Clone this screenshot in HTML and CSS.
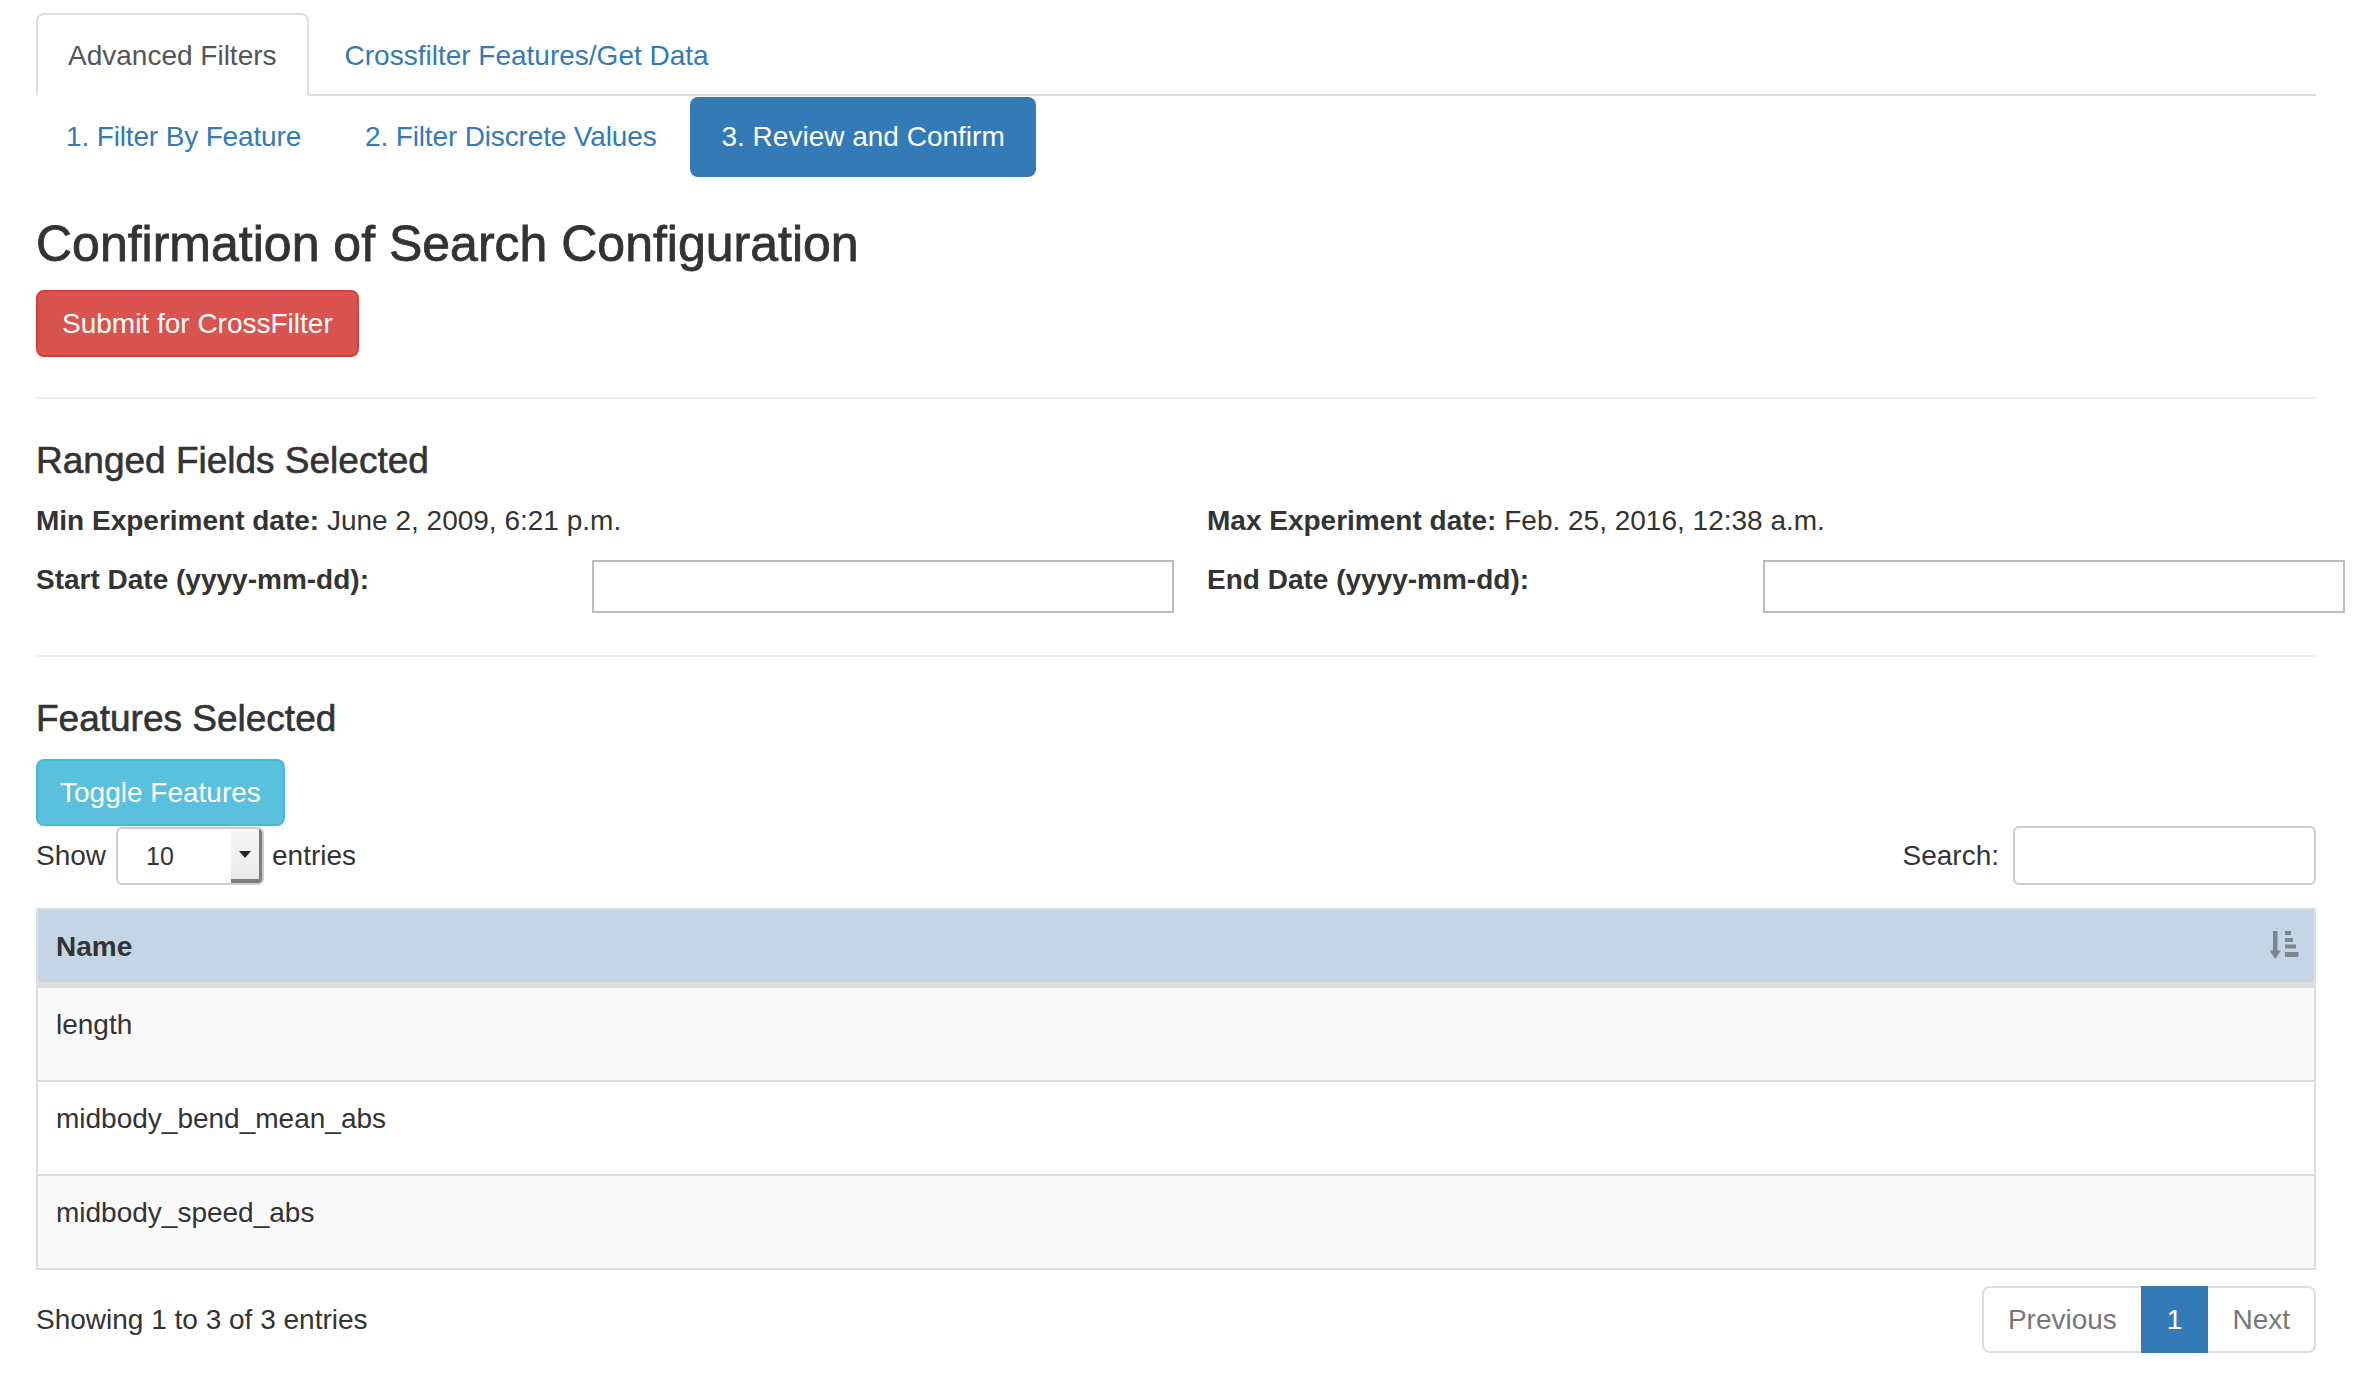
FILE: index.html
```html
<!DOCTYPE html>
<html lang="en">
<head>
<meta charset="utf-8">
<title>Confirmation of Search Configuration</title>
<link rel="stylesheet" href="styles.css">
</head>
<body>
<div class="page">
  <ul class="tabs">
    <li class="active"><a href="#">Advanced Filters</a></li>
    <li><a href="#">Crossfilter Features/Get Data</a></li>
  </ul>
  <ul class="pills">
    <li><a href="#">1. Filter By Feature</a></li>
    <li><a href="#">2. Filter Discrete Values</a></li>
    <li class="active"><a href="#">3. Review and Confirm</a></li>
  </ul>

  <h3 class="title">Confirmation of Search Configuration</h3>
  <button class="btn btn-danger" type="button">Submit for CrossFilter</button>

  <hr class="divider">

  <h4 class="section">Ranged Fields Selected</h4>
  <div class="ranges">
    <div class="range-col">
      <p class="info"><b>Min Experiment date:</b> June 2, 2009, 6:21 p.m.</p>
      <div class="field">
        <label>Start Date (yyyy-mm-dd):</label>
        <input class="date-input" type="text">
      </div>
    </div>
    <div class="range-col">
      <p class="info"><b>Max Experiment date:</b> Feb. 25, 2016, 12:38 a.m.</p>
      <div class="field">
        <label>End Date (yyyy-mm-dd):</label>
        <input class="date-input" type="text">
      </div>
    </div>
  </div>

  <hr class="divider divider-2">

  <h4 class="section">Features Selected</h4>
  <button class="btn btn-info" type="button">Toggle Features</button>

  <div class="dt-top">
    <div class="dt-length">
      <span>Show</span>
      <div class="fake-select">
        <span class="sel-value">10</span>
        <span class="sel-btn"><span class="caret"></span></span>
      </div>
      <span>entries</span>
    </div>
    <div class="dt-search">
      <span>Search:</span>
      <input class="search-input" type="search">
    </div>
  </div>

  <table class="dt-table">
    <thead>
      <tr>
        <th>Name
          <svg class="sort-icon" width="30" height="30" viewBox="0 0 30 30" aria-hidden="true">
            <rect x="4" y="1" width="4.5" height="21" fill="#7b868f"/>
            <polygon points="0.5,20.5 12,20.5 6.25,29" fill="#7b868f"/>
            <rect x="16" y="1" width="6" height="4" fill="#7b868f"/>
            <rect x="16" y="8" width="8" height="4" fill="#7b868f"/>
            <rect x="16" y="14.5" width="11" height="4" fill="#7b868f"/>
            <rect x="16" y="22" width="13.5" height="5" fill="#7b868f"/>
          </svg>
        </th>
      </tr>
    </thead>
    <tbody>
      <tr class="odd"><td>length</td></tr>
      <tr class="even"><td>midbody_bend_mean_abs</td></tr>
      <tr class="odd"><td>midbody_speed_abs</td></tr>
    </tbody>
  </table>

  <div class="dt-bottom">
    <div class="dt-info">Showing 1 to 3 of 3 entries</div>
    <ul class="pagination">
      <li class="disabled first"><a href="#">Previous</a></li>
      <li class="active"><a href="#">1</a></li>
      <li class="disabled last"><a href="#">Next</a></li>
    </ul>
  </div>
</div>
</body>
</html>
```

FILE: styles.css
```css
* {
  box-sizing: border-box;
}

html, body {
  margin: 0;
  padding: 0;
  background: #fff;
}

body {
  font-family: "Liberation Sans", Arial, Helvetica, sans-serif;
  font-size: 28px;
  line-height: 40px;
  color: #333;
}

a {
  color: #337ab7;
  text-decoration: none;
}

.page {
  padding: 13px 54px 0 36px;
}

/* Tabs */
.tabs {
  list-style: none;
  margin: 0;
  padding: 0;
  display: flex;
  border-bottom: 2px solid #ddd;
}

.tabs li {
  margin-bottom: -2px;
  margin-right: 4px;
}

.tabs a {
  display: block;
  padding: 21px 30px 18px;
  line-height: 40px;
  border: 2px solid transparent;
  border-radius: 8px 8px 0 0;
}

.tabs li.active a {
  color: #555;
  background: #fff;
  border-color: #ddd;
  border-bottom-color: transparent;
}

/* Pills */
.pills {
  list-style: none;
  margin: 1px 0 0;
  padding: 0;
  display: flex;
}

.pills li + li {
  margin-left: 4px;
}

.pills a {
  display: block;
  padding: 20px 30px;
  line-height: 40px;
  border-radius: 8px;
  letter-spacing: -0.15px;
}

.pills li.active a {
  background: #337ab7;
  color: #fff;
  letter-spacing: 0;
  padding-left: 31px;
  padding-right: 31px;
}

/* Headings */
.title {
  margin: 40px 0 18px;
  font-size: 50px;
  line-height: 55px;
  font-weight: 500;
  color: #333;
  -webkit-text-stroke: 0.8px #333;
}

.section {
  margin: 40px 0 20px;
  font-size: 37px;
  line-height: 41px;
  font-weight: 500;
  color: #333;
  -webkit-text-stroke: 0.6px #333;
}

/* Buttons */
.btn {
  display: inline-block;
  font-family: inherit;
  font-size: 28px;
  line-height: 40px;
  padding: 12px 24px 11px;
  border: 2px solid transparent;
  border-radius: 8px;
  color: #fff;
  cursor: pointer;
  margin: 0;
}

.btn-danger {
  background: #d9534f;
  border-color: #d43f3a;
}

.btn-info {
  background: #5bc0de;
  border-color: #46b8da;
  padding-left: 22px;
  padding-right: 22px;
}

/* Dividers */
.divider {
  border: 0;
  border-top: 2px solid #eee;
  margin: 40px 0 41px;
  height: 0;
}

.divider-2 {
  margin-top: 42px;
}

/* Ranged fields */
.ranges {
  display: grid;
  grid-template-columns: 1139px 1139px;
  column-gap: 32px;
}

.info {
  margin: 0 0 19px;
}

.field {
  display: grid;
  grid-template-columns: 556px 582px;
  align-items: start;
}

.field label {
  font-weight: bold;
  line-height: 40px;
}

.date-input {
  height: 53px;
  width: 100%;
  border: 2px solid #bdbdbd;
  border-radius: 0;
  background: #fff;
  margin: 0;
  padding: 0 8px;
  font-family: inherit;
  font-size: 26px;
}

/* DataTables controls */
.dt-top {
  display: flex;
  justify-content: space-between;
  align-items: center;
  margin-top: 0;
}

.dt-length {
  display: flex;
  align-items: center;
}

.fake-select {
  display: flex;
  width: 148px;
  height: 58px;
  margin: 0 8px 0 10px;
  border: 2px solid #ccc;
  border-radius: 6px;
  overflow: hidden;
  background: #fff;
}

.sel-value {
  flex: 1;
  padding-left: 28px;
  line-height: 54px;
  font-size: 25px;
  color: #333;
}

.sel-btn {
  width: 31px;
  background: linear-gradient(#f6f6f6, #e9e9e9);
  box-shadow: inset -3px -4px 0 #7d7d7d;
  display: flex;
  align-items: center;
  justify-content: center;
  padding-right: 3px;
  padding-bottom: 2px;
}

.caret {
  display: block;
  width: 0;
  height: 0;
  border-top: 7px solid #222;
  border-left: 6px solid transparent;
  border-right: 6px solid transparent;
}

.dt-search {
  display: flex;
  align-items: center;
}

.search-input {
  width: 303px;
  height: 59px;
  margin: 0 0 0 14px;
  border: 2px solid #ccc;
  border-radius: 6px;
  padding: 0 10px;
  font-family: inherit;
  font-size: 26px;
}

/* Table */
.dt-table {
  width: 100%;
  margin-top: 23px;
  border-collapse: separate;
  border-spacing: 0;
  border: 2px solid #ddd;
}

.dt-table th {
  position: relative;
  text-align: left;
  font-weight: bold;
  background: #c4d6e6;
  padding: 17px 18px 15px;
  line-height: 40px;
  border-bottom: 4px solid #ddd;
}

.sort-icon {
  position: absolute;
  top: 20px;
  right: 15px;
}

.dt-table td {
  padding: 17px 18px 35px;
  line-height: 40px;
  border-top: 2px solid #ddd;
}

.dt-table tr.odd td {
  background: #f9f9f9;
}

.dt-table tr.even td {
  background: #fff;
}

/* Bottom */
.dt-bottom {
  display: flex;
  justify-content: space-between;
  align-items: center;
  margin-top: 16px;
}

.pagination {
  list-style: none;
  margin: 0;
  padding: 0;
  display: flex;
}

.pagination li a {
  display: block;
  padding: 12px 24px 11px;
  line-height: 40px;
  border: 2px solid #ddd;
  margin-left: -2px;
  color: #777;
  background: #fff;
}

.pagination li.first a {
  margin-left: 0;
  border-radius: 8px 0 0 8px;
}

.pagination li.last a {
  border-radius: 0 8px 8px 0;
}

.pagination li.active a {
  background: #337ab7;
  border-color: #337ab7;
  color: #fff;
  position: relative;
  z-index: 1;
}
```
